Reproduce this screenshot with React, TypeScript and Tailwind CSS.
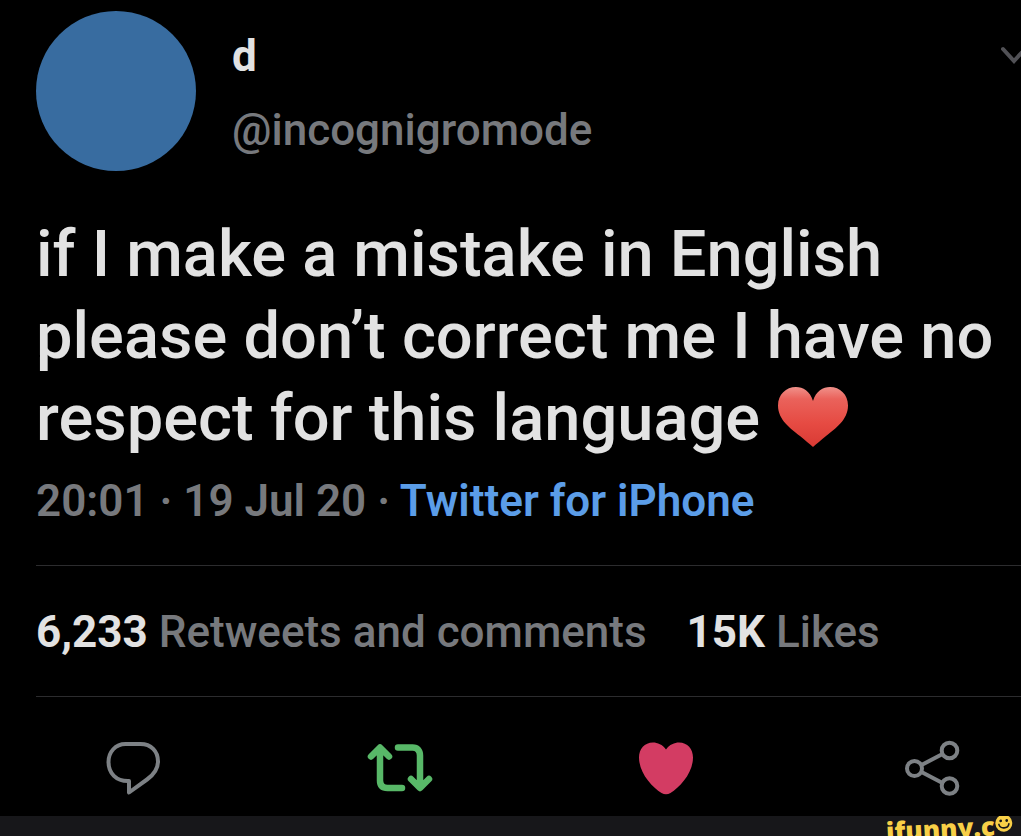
import React from 'react';

const stats = [
  { value: '6,233', label: 'Retweets and comments' },
  { value: '15K', label: 'Likes' }
];

const ReplyIcon: React.FC = () => (
  <svg viewBox="0 0 64 64" className="w-16 h-16" fill="none" stroke="currentColor" strokeWidth="4" strokeLinejoin="round">
    <path d="M24.500 7h15C50 7 57 14 57 24.500c0 8-4 13-11 18L28 55.500V44C15 44.500 7.500 36 7.500 25 7.500 15 14.500 7 24.500 7z" />
  </svg>
);

const RetweetIcon: React.FC = () => (
  <svg viewBox="0 0 64 64" className="w-16 h-16 overflow-visible" fill="none" stroke="currentColor" strokeWidth="6.500" strokeLinecap="round" strokeLinejoin="round">
    <path d="M3 19.500L12 10.500l9 9M12 12v31.500c0 5 2.500 7.500 7.500 7.500H34" />
    <path d="M61 42l-9 9-9-9M52 50V18.500c0-5-2.500-8-7.500-8H30" />
  </svg>
);

const LikeIcon: React.FC = () => (
  <svg viewBox="0 0 64 64" className="w-16 h-16" fill="currentColor">
    <path d="M32 12.500C35.500 7.500 40.500 5.500 45 5.500c8.500 0 14 6.500 14 15C59 36 46 50 36.500 56c-3 1.800-6 1.800-9 0C18 50 5 36 5 20.500 5 12 10.500 5.500 19 5.500c4.500 0 9.500 2 13 7z" />
  </svg>
);

const ShareIcon: React.FC = () => (
  <svg viewBox="0 0 64 64" className="w-16 h-16" fill="none" stroke="currentColor" strokeWidth="4">
    <circle cx="13.500" cy="31.500" r="7.500" />
    <circle cx="48.500" cy="13.500" r="7.800" />
    <circle cx="48.500" cy="49" r="7.800" />
    <path d="M20.500 28l21-11M20.500 35l21 11" />
  </svg>
);

const actions = [
  { name: 'Reply', icon: ReplyIcon, color: 'text-[#7d8185]' },
  { name: 'Retweet', icon: RetweetIcon, color: 'text-[#58b868]' },
  { name: 'Like', icon: LikeIcon, color: 'text-[#d33c63]' },
  { name: 'Share', icon: ShareIcon, color: 'text-[#7d8185]' }
];

const HeartEmoji: React.FC = () => (
  <svg viewBox="0 0 72 62" className="inline-block w-[72px] h-[62px] align-[-8px]" role="img" aria-label="red heart">
    <defs>
      <linearGradient id="heart" x1="0" y1="0" x2="0" y2="1">
        <stop offset="0" stopColor="#f0918a" />
        <stop offset="0.2" stopColor="#ea625b" />
        <stop offset="0.6" stopColor="#e64b43" />
        <stop offset="1" stopColor="#d93a34" />
      </linearGradient>
    </defs>
    <path
      d="M37 15C40 5 47 1 54 1c10 0 18 7.500 18 18.500C72 34 59 43 50 50c-5 4-9.500 8-13 11-3.500-3-8-7-13-11C15 43 2 34 2 19.500 2 8.500 10 1 20 1c7 0 14 4 17 14z"
      fill="url(#heart)"
    />
  </svg>
);

const App: React.FC = () => {
  return (
    <div className="overflow-hidden bg-black font-['Roboto',sans-serif] font-medium text-[#77797d]">
      <article className="pl-9">
        <header className="flex items-start pt-[11px]">
          <div className="w-40 h-40 shrink-0 rounded-full bg-[#386ca0]" />
          <div className="ml-9 flex-1 pt-2 text-[44px] leading-[74px]">
            <h1 className="font-bold text-[#e2e2e2]">d</h1>
            <p>@incognigromode</p>
          </div>
          <button type="button" aria-label="More" className="-mr-2 mt-8 text-[#515156]">
            <svg viewBox="0 0 28 24" className="w-7 h-6" fill="none" stroke="currentColor" strokeWidth="4" strokeLinecap="round">
              <path d="M2 6l11 12L24 6" />
            </svg>
          </button>
        </header>

        <p className="mt-[42px] text-[65px] leading-[82px] text-[#e2e2e2]">
          if I make a mistake in English
          <br />
          please don’t correct me I have no
          <br />
          respect for this language <HeartEmoji />
        </p>

        <p className="mt-[10px] text-[44px] font-semibold leading-[64px]">
          20:01 · 19 Jul 20 ·{' '}
          <a href="#source" className="text-[#5b9de8]">Twitter for iPhone</a>
        </p>

        <div className="mt-8 flex gap-10 border-y border-[#2c2c2e] pt-[34px] pb-8 text-[44px] leading-[64px]">
          {stats.map((stat) => (
            <p key={stat.label}>
              <span className="font-bold text-[#e2e2e2]">{stat.value}</span> {stat.label}
            </p>
          ))}
        </div>

        <div className="flex justify-between pt-10 pb-[15px] pl-[65px] pr-14">
          {actions.map(({ name, icon: Icon, color }) => (
            <button key={name} type="button" aria-label={name} className={color}>
              <Icon />
            </button>
          ))}
        </div>
      </article>

      <footer className="flex h-5 justify-end overflow-hidden bg-[#17171a] pr-2">
        <div className="flex h-6 -rotate-3 items-center font-['Open_Sans',sans-serif] text-[26px] font-extrabold leading-6 text-[#f8cf47]">
          <span>ifunny.c</span>
          <svg viewBox="0 0 18 18" className="mb-1 w-[18px] h-[18px]" role="img" aria-label="o">
            <circle cx="9" cy="9" r="8.500" fill="#f8cf47" />
            <circle cx="6" cy="6.500" r="1.400" fill="#17171a" />
            <circle cx="12" cy="6.500" r="1.400" fill="#17171a" />
            <path d="M4 10c1 5 9 5 10 0" fill="none" stroke="#17171a" strokeWidth="1.600" strokeLinecap="round" />
          </svg>
        </div>
      </footer>
    </div>
  );
};

export default App;
